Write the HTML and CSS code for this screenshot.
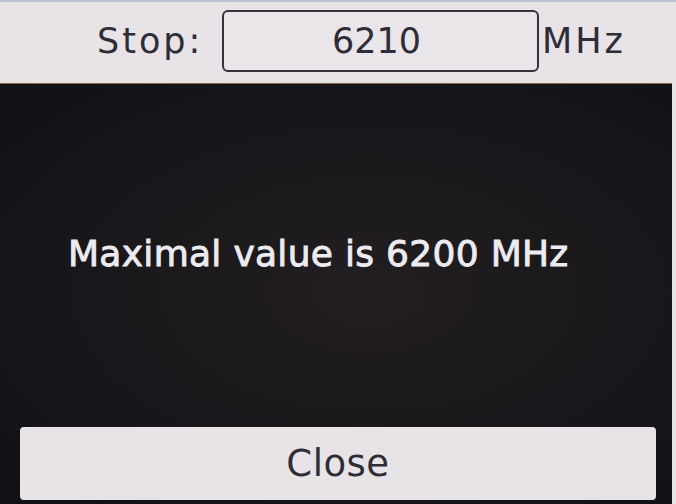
FILE: index.html
```html
<!DOCTYPE html>
<html>
<head>
<meta charset="utf-8">
<link rel="stylesheet" href="styles.css">
</head>
<body>
<div class="screen">
  <div class="top">
    <span class="label">Stop:</span>
    <div class="field">6210</div>
    <span class="unit">MHz</span>
  </div>
  <div class="dialog">
    <div class="message">Maximal value is 6200 MHz</div>
    <div class="button">Close</div>
  </div>
</div>
</body>
</html>
```
FILE: styles.css
```css
html, body {
  margin: 0;
  padding: 0;
  background: #e7e4e8;
}
.screen {
  width: 676px;
  height: 504px;
  display: flex;
  flex-direction: column;
  font-family: "DejaVu Sans", sans-serif;
  border-top: 2px solid #b9c0d6;
  box-sizing: border-box;
  overflow: hidden;
}
.top {
  height: 81px;
  display: flex;
  align-items: center;
  padding-left: 97px;
  padding-bottom: 4px;
  box-sizing: border-box;
  background: #e7e3e7;
  color: #2e2c36;
  font-size: 35px;
}
.label {
  width: 125px;
  letter-spacing: 3px;
}
.field {
  width: 317px;
  height: 62px;
  box-sizing: border-box;
  border: 2px solid #35343e;
  border-radius: 6px;
  display: flex;
  align-items: center;
  justify-content: center;
  padding-right: 8px;
  background: #e9e5e9;
}
.unit {
  margin-left: 3px;
  letter-spacing: 3px;
}
.dialog {
  flex: 1;
  margin-right: 4px;
  background: radial-gradient(ellipse at 55% 50%, #221e21 0%, #18161a 60%, #111116 100%);
  border-top: 1px solid #8a6a3a;
  display: flex;
  flex-direction: column;
}
.message {
  flex: 1;
  display: flex;
  align-items: center;
  padding-left: 68px;
  padding-bottom: 4px;
  color: #ecebf0;
  font-size: 36px;
  letter-spacing: 0.3px;
  -webkit-text-stroke: 0.9px #ecebf0;
}
.button {
  height: 73px;
  margin: 0 16px 4px 20px;
  background: #e8e3e6;
  border-radius: 4px;
  display: flex;
  align-items: center;
  justify-content: center;
  color: #2e2c36;
  font-size: 37px;
  letter-spacing: 0.5px;
}
```
